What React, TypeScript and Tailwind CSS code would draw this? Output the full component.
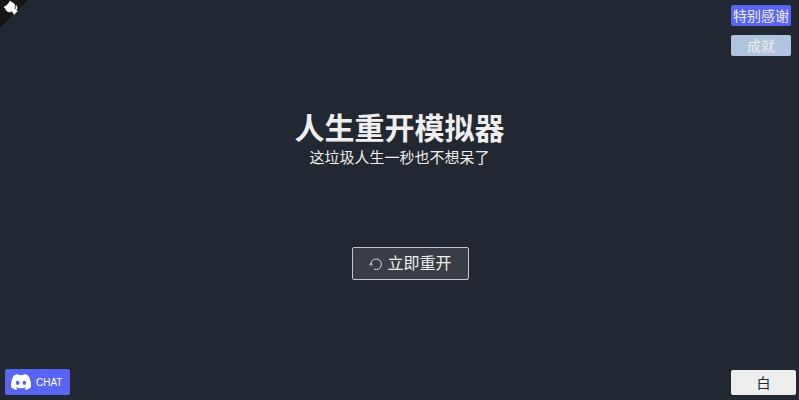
import React from "react";

function GithubCorner() {
  return (
    <a href="https://github.com" aria-label="GitHub" className="block size-7">
      <svg viewBox="0 0 250 250" className="size-7 -scale-x-100 fill-[#151513] text-white" aria-hidden="true">
        <path d="M0,0 L250,250 L250,0 Z" />
        <g transform="translate(-42 -38) scale(1.18)" fill="currentColor" stroke="currentColor" strokeWidth="5">
          <path d="M128.3,109.0 C113.8,99.7 119.0,89.6 119.0,89.6 C122.0,82.7 120.5,78.6 120.5,78.6 C119.2,72.0 123.4,76.3 123.4,76.3 C127.3,80.9 125.5,87.3 125.5,87.3 C122.9,97.6 130.6,101.9 134.4,103.2" />
          <path d="M115.0,115.0 C114.9,115.1 118.7,116.5 119.8,115.4 L133.7,101.6 C136.9,99.2 139.9,98.4 142.2,98.6 C133.8,88.0 127.5,74.4 143.8,58.0 C148.5,53.4 154.0,51.2 159.7,51.0 C160.3,49.4 163.2,43.6 171.4,40.1 C171.4,40.1 176.1,42.5 178.8,56.2 C183.1,58.6 187.2,61.8 190.9,65.4 C194.5,69.0 197.7,73.2 200.1,77.6 C213.8,80.2 216.3,84.9 216.3,84.9 C212.7,93.1 206.9,96.0 205.4,96.6 C205.1,102.4 203.0,107.8 198.3,112.5 C181.9,128.9 168.3,122.5 157.7,114.1 C157.9,116.9 156.7,120.9 152.7,124.9 L141.0,136.5 C139.8,137.7 141.6,141.9 141.8,141.8 Z" />
        </g>
      </svg>
    </a>
  );
}

function DiscordLogo() {
  return (
    <svg viewBox="0 0 127 96" className="h-4 w-5 fill-white" preserveAspectRatio="none" aria-hidden="true">
      <path d="M107.7,8.07A105.15,105.15,0,0,0,81.47,0a72.06,72.06,0,0,0-3.36,6.83A97.68,97.68,0,0,0,49,6.83,72.37,72.37,0,0,0,45.64,0,105.89,105.89,0,0,0,19.39,8.09C2.79,32.65-1.71,56.6.54,80.21h0A105.73,105.73,0,0,0,32.71,96.36,77.7,77.7,0,0,0,39.6,85.25a68.42,68.42,0,0,1-10.85-5.18c.91-.66,1.8-1.34,2.66-2a75.57,75.57,0,0,0,64.32,0c.87.71,1.76,1.39,2.66,2a68.68,68.68,0,0,1-10.87,5.19,77,77,0,0,0,6.89,11.1A105.25,105.25,0,0,0,126.6,80.22h0C129.24,52.84,122.09,29.11,107.7,8.07ZM42.45,65.69C36.18,65.69,31,60,31,53s5-12.74,11.43-12.74S54,46,53.89,53,48.84,65.69,42.45,65.69Zm42.24,0C78.41,65.69,73.25,60,73.25,53s5-12.74,11.44-12.74S96.23,46,96.12,53,91.08,65.69,84.69,65.69Z" />
    </svg>
  );
}

function RestartIcon() {
  return (
    <svg viewBox="0 0 14 14" className="size-3.5 fill-none stroke-[#eeeeee]" aria-hidden="true">
      <path d="M2.2 9.2A5.3 5.3 0 1 1 5 12.1" strokeOpacity="0.85" />
      <path d="M0.4 7.8L2 6.2L3.7 7.8" strokeOpacity="0.7" />
    </svg>
  );
}

export default function App() {
  return (
    <div className="flex min-h-screen flex-col bg-[#222831] font-['Liberation_Sans','Noto_Sans_CJK_SC',sans-serif] text-[#eeeeee]">
      <header className="flex items-start justify-between">
        <GithubCorner />
        <nav className="flex flex-col gap-[9px] pt-[5px] pr-2">
          <button type="button" className="h-[21px] w-15 rounded-xs bg-[#5865f2] text-sm whitespace-nowrap">
            特别感谢
          </button>
          <button type="button" className="h-[21px] w-15 rounded-xs bg-[#b0c4de] text-sm whitespace-nowrap">
            成就
          </button>
        </nav>
      </header>

      <main className="flex flex-1 flex-col items-center pt-14">
        <h1 className="text-center text-[30px] leading-[34px] font-bold">人生重开模拟器</h1>
        <p className="text-center text-[15px] leading-6">这垃圾人生一秒也不想呆了</p>
        <button
          type="button"
          className="mt-[77px] ml-[22px] flex h-[33px] items-center gap-1 rounded-xs border border-[#c4c6c8] bg-[#393e46] px-4 text-base"
        >
          <RestartIcon />
          立即重开
        </button>
      </main>

      <footer className="flex items-end justify-between pr-[3px] pb-[5px] pl-[5px]">
        <a
          href="https://discord.com"
          className="flex h-[26px] w-[65px] items-center gap-[5px] rounded-xs bg-[#5865f2] px-1.5 text-[10px] text-white"
        >
          <DiscordLogo />
          CHAT
        </a>
        <button type="button" className="h-[25px] w-[65px] rounded-xs bg-[#eeeeee] text-sm text-[#222831]">
          白
        </button>
      </footer>
    </div>
  );
}
